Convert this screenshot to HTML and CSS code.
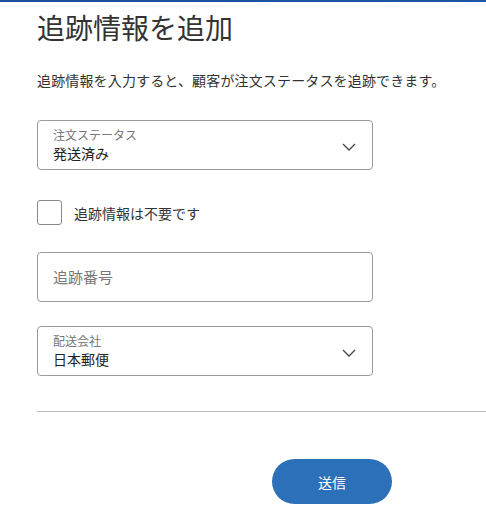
FILE: index.html
```html
<!DOCTYPE html>
<html lang="ja">
<head>
<meta charset="utf-8">
<link rel="stylesheet" href="styles.css">
</head>
<body>
<div class="topbar"></div>
<main class="page">
  <h1 class="title">追跡情報を追加</h1>
  <p class="desc">追跡情報を入力すると、顧客が注文ステータスを追跡できます。</p>
  <div class="field select status">
    <div class="field-text">
      <span class="field-label">注文ステータス</span>
      <span class="field-value">発送済み</span>
    </div>
    <svg class="chev" width="14" height="8" viewBox="0 0 14 8"><path d="M1 1 L7 7 L13 1" fill="none" stroke="#444" stroke-width="1.3"/></svg>
  </div>
  <label class="check">
    <span class="box"></span>
    <span class="check-label">追跡情報は不要です</span>
  </label>
  <div class="field input">
    <span class="placeholder">追跡番号</span>
  </div>
  <div class="field select carrier">
    <div class="field-text">
      <span class="field-label">配送会社</span>
      <span class="field-value">日本郵便</span>
    </div>
    <svg class="chev" width="14" height="8" viewBox="0 0 14 8"><path d="M1 1 L7 7 L13 1" fill="none" stroke="#444" stroke-width="1.3"/></svg>
  </div>
  <hr class="divider">
  <div class="actions">
    <button class="submit">送信</button>
  </div>
</main>
</body>
</html>
```
FILE: styles.css
```css
html, body {
  margin: 0;
  padding: 0;
  background: #fff;
}
body {
  font-family: "Noto Sans CJK JP", "Noto Sans", sans-serif;
  font-weight: 400;
  color: #333;
}
.topbar {
  height: 2px;
  background: linear-gradient(90deg, #1b4e9b, #1d55a8);
}
.page {
  padding-left: 37px;
  display: flex;
  flex-direction: column;
}
.title {
  margin: 8px 0 0;
  font-size: 28px;
  line-height: 34px;
  font-weight: 400;
  color: #333;
}
.desc {
  margin: 26px 0 0;
  font-size: 14px;
  letter-spacing: 0.15px;
  line-height: 20px;
  color: #333;
}
.field {
  box-sizing: border-box;
  width: 336px;
  height: 50px;
  border: 1px solid #9b9b9b;
  border-radius: 4px;
  display: flex;
  align-items: center;
  padding: 0 15px;
}
.status {
  margin-top: 30px;
}
.field-text {
  flex: 1;
  display: flex;
  flex-direction: column;
}
.field-label {
  font-size: 12px;
  line-height: 16px;
  color: #777;
}
.field-value {
  font-size: 14px;
  line-height: 20px;
  color: #222;
}
.chev {
  margin-right: 1px;
  margin-top: 4px;
}
.check {
  margin-top: 30px;
  display: flex;
  align-items: center;
  height: 25px;
}
.box {
  box-sizing: border-box;
  width: 25px;
  height: 25px;
  border: 1px solid #8a8a8a;
  border-radius: 3px;
}
.check-label {
  margin-left: 12px;
  font-size: 14px;
  line-height: 20px;
  color: #333;
}
.input {
  margin-top: 27px;
}
.placeholder {
  font-size: 15px;
  line-height: 20px;
  color: #777;
}
.carrier {
  margin-top: 24px;
}
.divider {
  margin: 35px 0 0;
  border: 0;
  border-top: 1px solid #b9b9b9;
  height: 0;
}
.actions {
  margin-top: 47px;
  display: flex;
}
.submit {
  margin-left: 235px;
  width: 120px;
  height: 45px;
  border: 0;
  border-radius: 23px;
  background: #2b70b8;
  color: #fff;
  font-family: inherit;
  font-size: 14px;
}
```
